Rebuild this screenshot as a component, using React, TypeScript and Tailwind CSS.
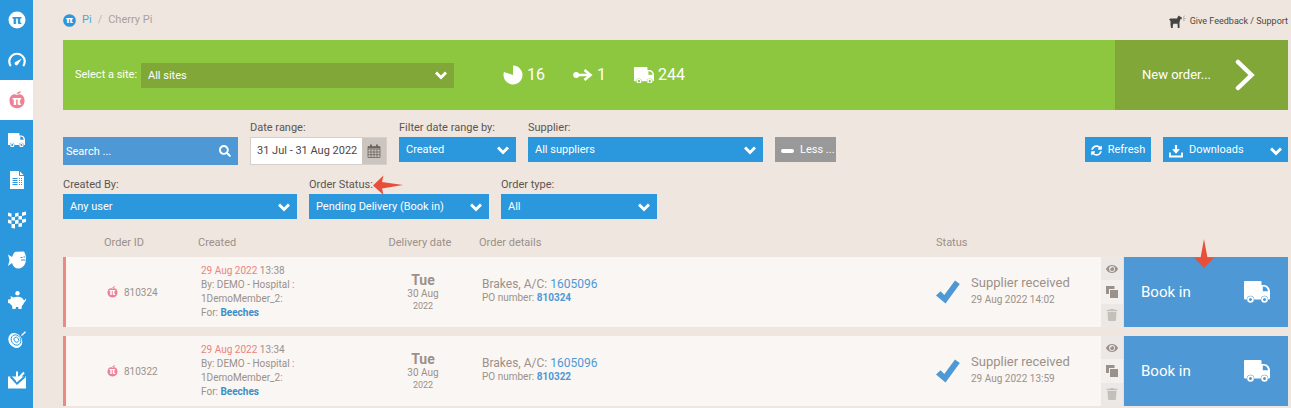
import React, { ReactNode } from "react";
import { FaEye, FaSearch, FaSyncAlt, FaTrash } from "react-icons/fa";

type IconProps = { className?: string };

function PiIcon({ className = "" }: IconProps) {
  return (
    <svg viewBox="0 0 18 18" className={className} aria-hidden="true">
      <circle cx="9" cy="9" r="8.5" className="fill-current" />
      <text x="9" y="13" textAnchor="middle" fontSize="13" fontWeight="bold" fontFamily="DejaVu Sans, sans-serif" className="fill-[#2b97dc]">π</text>
    </svg>
  );
}

function PiBadge({ className = "" }: IconProps) {
  return (
    <svg viewBox="0 0 18 18" className={className} aria-hidden="true">
      <circle cx="9" cy="9" r="8.8" className="fill-[#2b97dc]" />
      <text x="9" y="13" textAnchor="middle" fontSize="13" fontWeight="bold" fontFamily="DejaVu Sans, sans-serif" className="fill-white">π</text>
    </svg>
  );
}

function CherryIcon({ className = "" }: IconProps) {
  return (
    <svg viewBox="0 0 16 18" className={className} aria-hidden="true">
      <path d="M8 4C10 2.800 12.500 3.200 14.200 5.200 16.200 7.800 15.800 12.200 13.800 14.800 11.500 17.900 4.500 17.900 2.200 14.800.2 12.200-.2 7.800 1.800 5.200 3.500 3.200 6 2.800 8 4Z" className="fill-[#ee8195]" />
      <path d="M7.500 3C8.500 1 10 .3 12 .3 11.500 2 10 3 7.500 3Z" className="fill-[#ee8195]" />
      <text x="8" y="13.800" textAnchor="middle" fontSize="12" fontWeight="bold" fontFamily="DejaVu Sans, sans-serif" className="fill-white">π</text>
    </svg>
  );
}

function TruckIcon({ className = "" }: IconProps) {
  return (
    <svg viewBox="0 0 26 22" className={className} fill="currentColor" aria-hidden="true">
      <path fillRule="evenodd" d="M1 0h15.500q1 0 1 1v3h2.500c3.500 0 6 3 6 6.500V17.500q0 1-1 1h-.8a3.700 3.700 0 0 0-7.400 0h-6.600a3.700 3.700 0 0 0-7.400 0H1q-1 0-1-1V1q0-1 1-1ZM18.800 5.500v4.700h5.200c-.3-3-2-4.700-5.200-4.700Z" />
      <path fillRule="evenodd" d="M6.500 15.200a3.300 3.300 0 1 1 0 6.600 3.300 3.300 0 0 1 0-6.600Zm0 1.800a1.500 1.500 0 1 0 0 3 1.500 1.500 0 0 0 0-3ZM20.500 15.200a3.300 3.300 0 1 1 0 6.600 3.300 3.300 0 0 1 0-6.600Zm0 1.800a1.500 1.500 0 1 0 0 3 1.500 1.500 0 0 0 0-3Z" />
    </svg>
  );
}

function GaugeIcon({ className = "" }: IconProps) {
  return (
    <svg viewBox="0 0 18 18" className={className} aria-hidden="true">
      <path d="M2.800 15A7.700 7.700 0 1 1 15.200 15" fill="none" stroke="currentColor" strokeWidth="2.200" />
      <path d="M13.800 7.500 10.300 13a1.900 1.900 0 1 1-2.500-2.300Z" fill="currentColor" />
    </svg>
  );
}

function InvoiceIcon({ className = "" }: IconProps) {
  return (
    <svg viewBox="0 0 18 18" className={className} aria-hidden="true">
      <path d="M2 0h9.500L16 4.500V18H2Z" fill="currentColor" />
      <path d="M11.500 0v4.500H16M4.500 7.500h5M4.500 9.500h5M4.500 11.500h5M4.500 13.500h5M11 7.500h1M11 9.500h1M11 11.500h1M11 13.500h1M13 7.500h1M13 9.500h1M13 11.500h1M13 13.500h1" fill="none" stroke="#2b97dc" strokeWidth="1" />
    </svg>
  );
}

function FlagIcon({ className = "" }: IconProps) {
  return (
    <svg viewBox="0 0 18 18" className={className} fill="currentColor" aria-hidden="true">
      <path d="M0 1.500 3.500 2.500V6L0 5ZM7 2.500 10.500 1.500V5L7 6ZM14 1.500 18 .5V4L14 5ZM3.500 6 7 6V9.500L3.500 9.500ZM10.500 5 14 5V8.500L10.500 8.500ZM0 8.500 3.500 9.500V13L0 12ZM7 9.500 10.500 8.500V12.500L7 13ZM14 8.500 18 7.500V11L14 12ZM3.500 13 7 13V17.500L3.500 17ZM10.500 12.500 14 12V15.500L10.500 16Z" />
    </svg>
  );
}

function FishIcon({ className = "" }: IconProps) {
  return (
    <svg viewBox="0 0 18 18" className={className} aria-hidden="true">
      <path d="M0 3.500 4 6C5.500 3 6 .5 8.500.8L16 .5C17.500 3 18 5 18 8c0 5-2.500 9-7.500 9.500C7 17.500 5 15.500 4 12L0 15l1.500-5.800Z" fill="currentColor" />
      <path d="M12.500 6.500h2M15.500 6h1.500M13 9h4.500" fill="none" stroke="#2b97dc" strokeWidth="1" />
    </svg>
  );
}

function PiggyIcon({ className = "" }: IconProps) {
  return (
    <svg viewBox="0 0 18 18" className={className} fill="currentColor" aria-hidden="true">
      <circle cx="9.500" cy="2.300" r="2.200" />
      <path d="M2.500 5 5.500 6.500C8 5.300 12 5.300 14.300 7.200c.9.800 1.400 1.700 1.700 2.600.7-.2 1-1 1-2l1 .2c0 2-.8 3-2 3.500-.2 1.300-.9 2.300-2 3.100L13.500 18h-3l-.3-2H8l-.5 2h-3L4 14.700C3 14 2.300 13.200 2 12.500L0 12V8.500h1.800L3 7.300Z" />
    </svg>
  );
}

function TargetIcon({ className = "" }: IconProps) {
  return (
    <svg viewBox="0 0 18 18" className={className} aria-hidden="true">
      <ellipse cx="7.300" cy="9.500" rx="6.500" ry="8" transform="rotate(-35 7.300 9.500)" fill="currentColor" />
      <g fill="none" stroke="#2b97dc" strokeWidth=".9">
        <ellipse cx="8" cy="9" rx="4.600" ry="5.400" transform="rotate(-35 8 9)" />
        <ellipse cx="8.300" cy="8.700" rx="2.200" ry="2.700" transform="rotate(-35 8.300 8.700)" />
      </g>
      <path d="M13.500 4.500 17.500.8" fill="none" stroke="currentColor" strokeWidth="1.500" />
    </svg>
  );
}

function InboxCheckIcon({ className = "" }: IconProps) {
  return (
    <svg viewBox="0 0 18 18" className={className} aria-hidden="true">
      <path d="M0 5.500H18V17.500H0Z" fill="currentColor" />
      <path d="M2.500 5.500 9 12.500 17 5.500" fill="none" stroke="#2b97dc" strokeWidth="2" />
      <path d="M9 .5v8.500L16 1.500" fill="none" stroke="currentColor" strokeWidth="2" />
    </svg>
  );
}

function PieIcon({ className = "" }: IconProps) {
  return (
    <svg viewBox="0 0 20 20" className={className} fill="currentColor" aria-hidden="true">
      <path d="M10 10V.5A9.500 9.500 0 1 1 1 7Z" />
    </svg>
  );
}

function RouteIcon({ className = "" }: IconProps) {
  return (
    <svg viewBox="0 0 20 14" className={className} aria-hidden="true">
      <circle cx="3.200" cy="7" r="3" fill="currentColor" />
      <path d="M3 7h14M11.500 2 17.500 7l-6 5" fill="none" stroke="currentColor" strokeWidth="2.600" />
    </svg>
  );
}

function DownloadIcon({ className = "" }: IconProps) {
  return (
    <svg viewBox="0 0 14 14" className={className} fill="none" stroke="currentColor" aria-hidden="true">
      <path d="M1 8.500V12.500H13V8.500" strokeWidth="1.800" />
      <path d="M7 1v5" strokeWidth="2.200" />
      <path d="M3 5.200h8L7 9.800Z" fill="currentColor" stroke="none" />
    </svg>
  );
}

function CalendarIcon({ className = "" }: IconProps) {
  return (
    <svg viewBox="0 0 14 14" className={className} fill="none" stroke="currentColor" aria-hidden="true">
      <path d="M1 2.500h12v11H1ZM1 5h12M1 8h12M1 10.700h12M4 5v8.500M7 5v8.500M10 5v8.500" strokeWidth=".8" />
      <path d="M1 3.500h12" strokeWidth="1.500" />
      <path d="M4 .5v3M10 .5v3" strokeWidth="1.800" />
    </svg>
  );
}

function GoatIcon({ className = "" }: IconProps) {
  return (
    <svg viewBox="0 0 17 14" className={className} aria-hidden="true">
      <path d="M0 4.500 1.500 3.500H8L9 1.500 10 .5 11 1.500 13 2.800 12.500 4.300 11.300 4.300 10.500 7.500V13H8.800L8.500 8.800H4.500L3.800 10.500V13H2L1.500 9.500V6Z" fill="#444" />
      <path d="M14 2.500 15.800.8M14.200 3.800 16.500 3.500M14 5 15.500 5.500" stroke="#888" strokeWidth=".7" />
    </svg>
  );
}

function CopyIcon({ className = "" }: IconProps) {
  return (
    <svg viewBox="0 0 12 12" className={className} fill="currentColor" aria-hidden="true">
      <path d="M0 0h8.500v3H3v5H0ZM4 4h8v8H4Z" />
    </svg>
  );
}

function CheckIcon({ className = "" }: IconProps) {
  return (
    <svg viewBox="0 0 24 24" className={className} fill="currentColor" aria-hidden="true">
      <path d="M0 15.500 4.500 11.300 8.300 15 19 .5 23.800 4 9.500 23.500Z" />
    </svg>
  );
}

function ChevronIcon({ className = "" }: IconProps) {
  return (
    <svg viewBox="0 0 12 12" className={className} fill="none" stroke="currentColor" strokeWidth="3" aria-hidden="true">
      <path d="M1 3.500 6 8.500 11 3.500" />
    </svg>
  );
}

function Select({ id, value, tone = "bg-[#2b97dc]" }: { id: string; value: string; tone?: string }) {
  return (
    <div className="grid">
      <select id={id} className={`col-start-1 row-start-1 h-[25px] w-full appearance-none pt-0.5 pr-7 pl-[7px] text-[11px] text-white ${tone}`}>
        <option>{value}</option>
      </select>
      <ChevronIcon className="pointer-events-none col-start-1 row-start-1 mr-[7px] size-3 self-center justify-self-end text-white" />
    </div>
  );
}

function Field({ id, label, width, children }: { id: string; label: ReactNode; width: string; children: ReactNode }) {
  return (
    <div className={width}>
      <label htmlFor={id} className="block text-[11px] leading-[18px] text-[#5c5551]">{label}</label>
      {children}
    </div>
  );
}

const navItems = [
  { label: "Pi", icon: <PiIcon className="size-[18px]" /> },
  { label: "Dashboard", icon: <GaugeIcon className="size-[18px]" /> },
  { label: "Cherry Pi", icon: <CherryIcon className="h-[18px] w-4" />, active: true },
  { label: "Deliveries", icon: <TruckIcon className="w-[17px]" /> },
  { label: "Invoices", icon: <InvoiceIcon className="size-[18px]" /> },
  { label: "Finish", icon: <FlagIcon className="size-[18px]" /> },
  { label: "Fish", icon: <FishIcon className="size-[18px]" /> },
  { label: "Savings", icon: <PiggyIcon className="size-[18px]" /> },
  { label: "Targets", icon: <TargetIcon className="size-[18px]" /> },
  { label: "Inbox", icon: <InboxCheckIcon className="size-[18px]" /> },
];

const orders = [
  { id: "810324", time: "13:38", received: "14:02" },
  { id: "810322", time: "13:34", received: "13:59" },
];

function OrderRow({ order }: { order: (typeof orders)[number] }) {
  return (
    <tr className="h-[70px] bg-[#faf6f3] text-[#9a918a]">
      <td className="border-l-[3px] border-[#ea8a83] pl-[41px]">
        <span className="flex items-center gap-1.5 text-[10px]">
          <CherryIcon className="h-3 w-[11px]" />
          {order.id}
        </span>
      </td>
      <td className="pl-[3px] text-[10px] leading-[14px]">
        <div><span className="text-[#e8857f]">29 Aug 2022</span> {order.time}</div>
        <div>By: DEMO - Hospital :</div>
        <div>1DemoMember_2:</div>
        <div>For: <a href="#beeches" className="font-bold text-[#3a8fc8]">Beeches</a></div>
      </td>
      <td className="text-center leading-3">
        <div className="text-sm leading-4 font-bold">Tue</div>
        <div className="text-[10px]">30 Aug</div>
        <div className="text-[9px]">2022</div>
      </td>
      <td className="pb-1 pl-[9px]">
        <div className="text-xs leading-4">Brakes, A/C: <a href="#account" className="text-[#4e99d5]">1605096</a></div>
        <div className="text-[10px] leading-3">PO number: <a href="#po" className="font-bold text-[#4e99d5]">{order.id}</a></div>
      </td>
      <td className="pl-[5px]">
        <div className="flex items-center gap-[11px]">
          <CheckIcon className="size-6 text-[#4e99d5]" />
          <div className="pb-1">
            <div className="text-[13px] leading-5">Supplier received</div>
            <div className="text-[10px] leading-[14px]">29 Aug 2022 {order.received}</div>
          </div>
        </div>
      </td>
      <td>
        <div className="grid h-[70px] grid-rows-3 bg-[#ece8e6]">
          <button type="button" aria-label="View order" className="grid place-items-center"><FaEye className="size-3" /></button>
          <button type="button" aria-label="Copy order" className="grid place-items-center bg-[#f3f0ee]"><CopyIcon className="size-3" /></button>
          <button type="button" aria-label="Delete order" className="grid place-items-center text-[#c5bfba]"><FaTrash className="size-3" /></button>
        </div>
      </td>
      <td>
        <button type="button" className="flex h-[70px] w-full items-center justify-between border-l border-[#e3dfdc] bg-[#4e99d5] pr-[18px] pl-[17px] text-[15px] text-white">
          Book in
          <TruckIcon className="w-[26px]" />
        </button>
      </td>
    </tr>
  );
}

export default function App() {
  return (
    <div className="flex min-h-screen bg-[#efe6df] font-['Roboto',sans-serif]">
      <nav className="w-[33px] shrink-0 bg-[#2b97dc]">
        {navItems.map((item) => (
          <a key={item.label} href="#section" aria-label={item.label} className={`grid h-10 place-items-center text-white ${item.active ? "bg-white" : ""}`}>
            {item.icon}
          </a>
        ))}
      </nav>

      <main className="min-w-0 flex-1 pr-[3px] pl-[30px]">
        <header className="flex h-10 items-center justify-between">
          <div className="flex items-center gap-1.5 text-[11px] text-[#a8a29d]">
            <PiBadge className="size-[13px]" />
            <a href="#pi" className="text-[#4aa5de]">Pi</a>
            <span className="text-[#bdb6b0]">/</span>
            <span>Cherry Pi</span>
          </div>
          <a href="#support" className="flex items-center gap-1 pt-[3px] text-[9px] text-[#4c4744]">
            <GoatIcon className="w-[17px]" />
            Give Feedback / Support
          </a>
        </header>

        <section className="flex h-[70px] items-stretch bg-[#8dc73f] text-white">
          <div className="flex flex-1 items-center pl-3">
            <label htmlFor="site" className="w-[66px] text-[11px]">Select a site:</label>
            <div className="w-[313px]"><Select id="site" value="All sites" tone="bg-[#81a739]" /></div>
            <div className="flex items-center gap-7 pl-[49px] text-base">
              <span className="flex items-center gap-1"><PieIcon className="size-5" />16</span>
              <span className="flex items-center gap-1"><RouteIcon className="w-5" />1</span>
              <span className="flex items-center gap-1"><TruckIcon className="w-5" />244</span>
            </div>
          </div>
          <button type="button" className="flex w-[173px] items-center justify-between bg-[#81a739] pr-[33px] pl-[27px] text-[13px]">
            New order...
            <svg viewBox="0 0 20 32" className="w-5" fill="none" stroke="currentColor" strokeWidth="4.500" strokeLinecap="round" aria-hidden="true">
              <path d="M3 3 16.500 16 3 29" />
            </svg>
          </button>
        </section>

        <section className="flex flex-col gap-[11px] pt-[9px]">
          <div className="flex items-end gap-3">
            <div className="grid w-[175px]">
              <input type="search" aria-label="Search" placeholder="Search ..." className="col-start-1 row-start-1 h-7 w-full bg-[#4e99d5] px-[3px] text-[11px] text-white placeholder:text-white" />
              <FaSearch aria-hidden="true" className="col-start-1 row-start-1 mr-[7px] size-3 self-center justify-self-end text-white" />
            </div>
            <Field id="dates" label="Date range:" width="w-[137px]">
              <div className="flex h-7 border border-[#d5cec9] bg-white">
                <input id="dates" readOnly defaultValue="31 Jul - 31 Aug 2022" className="min-w-0 flex-1 pl-1.5 text-[11px] text-[#4c4744]" />
                <button type="button" aria-label="Pick dates" className="grid w-6 place-items-center bg-[#cbc4bf] text-[#6b645f]"><CalendarIcon className="size-3.5" /></button>
              </div>
            </Field>
            <div className="flex flex-1 items-end gap-3 pb-[3px]">
              <Field id="filter" label="Filter date range by:" width="w-[117px]"><Select id="filter" value="Created" /></Field>
              <Field id="supplier" label="Supplier:" width="w-[235px]"><Select id="supplier" value="All suppliers" /></Field>
              <button type="button" className="flex h-[25px] w-[61px] items-center gap-1.5 bg-[#999] pt-0.5 pl-1.5 text-[11px] whitespace-nowrap text-white">
                <span className="h-1 w-[13px] shrink-0 rounded-sm bg-white" />
                Less ...
              </button>
              <button type="button" className="ml-auto flex h-[25px] w-[66px] items-center justify-center gap-1.5 bg-[#2b97dc] pt-0.5 text-[11px] text-white">
                <FaSyncAlt aria-hidden="true" className="size-[11px]" />
                Refresh
              </button>
              <button type="button" className="flex h-[25px] w-[125px] items-center gap-1.5 bg-[#2b97dc] px-1.5 pt-0.5 text-[11px] text-white">
                <DownloadIcon className="size-3.5" />
                Downloads
                <ChevronIcon className="ml-auto size-3" />
              </button>
            </div>
          </div>

          <div className="flex gap-3">
            <Field id="created-by" label="Created By:" width="w-[234px]"><Select id="created-by" value="Any user" /></Field>
            <Field
              id="status"
              width="w-[180px]"
              label={
                <span className="relative">
                  Order Status:
                  <svg viewBox="0 0 30 20" className="absolute top-[-3px] left-full h-5 w-[30px]" aria-hidden="true">
                    <path d="M0 10.500 10.500.5 9 7 30 10 9 13.500 10.500 20Z" fill="#e74f3a" />
                  </svg>
                </span>
              }
            >
              <Select id="status" value="Pending Delivery (Book in)" />
            </Field>
            <Field id="type" label="Order type:" width="w-[156px]"><Select id="type" value="All" /></Field>
          </div>
        </section>

        <div className="relative pt-[10px]">
          <table className="w-full table-fixed border-separate border-spacing-x-0 border-spacing-y-[9px]">
            <colgroup>
              <col className="w-[135px]" />
              <col className="w-[175px]" />
              <col className="w-[100px]" />
              <col />
              <col className="w-[170px]" />
              <col className="w-[22px]" />
              <col className="w-[165px]" />
            </colgroup>
            <thead>
              <tr className="text-left text-[11px] leading-[10px] text-[#9a918a] *:font-normal">
                <th className="pl-[41px]">Order ID</th>
                <th>Created</th>
                <th className="pr-1.5 text-center">Delivery date</th>
                <th className="pl-1.5">Order details</th>
                <th className="pl-[5px]">Status</th>
                <th aria-label="Actions" />
                <th aria-label="Book in" />
              </tr>
            </thead>
            <tbody>
              {orders.map((order) => <OrderRow key={order.id} order={order} />)}
            </tbody>
          </table>
          <svg viewBox="0 0 20 30" className="absolute top-5 right-[74px] h-[30px] w-5" aria-hidden="true">
            <path d="M10 0 13.500 19 20 18.500 10 29 0 18.500 6.500 19Z" fill="#e74f3a" />
          </svg>
        </div>
      </main>
    </div>
  );
}
